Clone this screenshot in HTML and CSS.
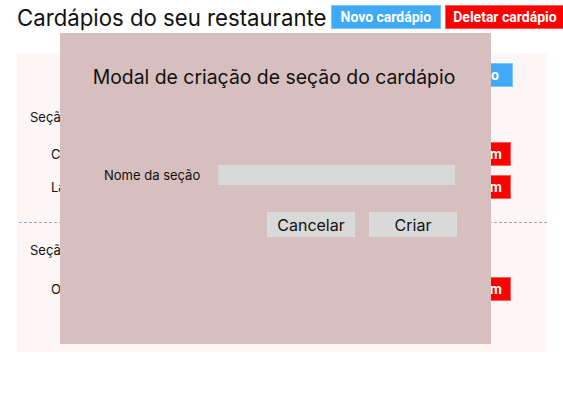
FILE: index.html
```html
<!DOCTYPE html>
<html lang="pt-BR">
<head>
<meta charset="utf-8">
<link rel="stylesheet" href="styles.css">
</head>
<body>
<div class="page">
  <header class="top">
    <h1 class="title">Cardápios do seu restaurante</h1>
    <button class="btn btn-blue">Novo cardápio</button>
    <button class="btn btn-red">Deletar cardápio</button>
  </header>
  <section class="card">
    <div class="card-head">
      <button class="btn btn-blue">Nova seção</button>
    </div>
    <div class="sec">
      <div class="sec-name">Seção 1</div>
      <div class="items">
        <div class="item"><span>Coxinha</span><button class="btn btn-red">Deletar item</button></div>
        <div class="item"><span>Lasanha</span><button class="btn btn-red">Deletar item</button></div>
      </div>
    </div>
    <hr class="div">
    <div class="sec sec2">
      <div class="sec-name">Seção 2</div>
      <div class="items">
        <div class="item"><span>Omelete</span><button class="btn btn-red">Deletar item</button></div>
      </div>
    </div>
  </section>
</div>
<div class="modal">
  <h2 class="modal-title">Modal de criação de seção do cardápio</h2>
  <div class="field">
    <label class="label">Nome da seção</label>
    <div class="input"></div>
  </div>
  <div class="actions">
    <button class="mbtn">Cancelar</button>
    <button class="mbtn">Criar</button>
  </div>
</div>
</body>
</html>
```

FILE: styles.css
```css
* { box-sizing: border-box; }
html, body { margin: 0; padding: 0; background: #fff; }
body { font-family: Inter, "Noto Sans", sans-serif; color: #111; width: 563px; height: 401px; overflow: hidden; position: relative; }
.page { padding: 5px 0 0 17px; }
.top { display: flex; align-items: flex-start; gap: 4px; height: 48px; }
.title { margin: 0; font-weight: 400; font-size: 22.2px; line-height: 26px; color: #111; white-space: nowrap; }
.btn { border: 1px solid transparent; font-family: Roboto, sans-serif; font-weight: 700; font-size: 14px; color: #fff; height: 24px; padding: 0 9px; white-space: nowrap; }
.btn-blue { background: #3eaaf8; border-color: #7cc6f7; }
.btn-red { background: #ff0000; border-color: #ff5a5a; }
.top .btn-red { padding: 0 12px 0 7px; flex-shrink: 0; }
.card { width: 530px; height: 299px; background: #fcf6f6; padding: 10px 34px 0 0; }
.card-head { display: flex; justify-content: flex-end; height: 24px; }
.card-head .btn { padding: 0 13px 0 10px; }
.sec { padding-left: 13px; }
.sec-name { font-size: 13px; margin-top: 22px; line-height: 16px; }
.items { padding: 17px 2px 0 21px; display: flex; flex-direction: column; gap: 9px; }
.item { display: flex; justify-content: space-between; align-items: center; font-size: 13px; }
.item .btn { padding: 0 8px; }
.div { margin: 23px 0 0 2px; width: 528px; border: 0; border-top: 1px dashed #aaa; }
.sec2 .sec-name { margin-top: 19px; }
.sec2 .items { padding-top: 19px; }
.modal { position: absolute; left: 60px; top: 33px; width: 431px; height: 311px; background: #d7bfbf; padding: 32px 34px 0 44px; }
.modal-title { margin: 0 -27px 0 -40px; font-weight: 400; font-size: 19.4px; line-height: 24px; text-align: center; color: #111; white-space: nowrap; }
.field { display: flex; align-items: center; margin-top: 76px; }
.label { font-size: 13px; width: 114px; color: #111; }
.input { width: 237px; height: 20px; background: #d9d9d9; }
.actions { display: flex; justify-content: flex-end; gap: 14px; margin-top: 27px; }
.mbtn { width: 88px; height: 25px; border: 1px solid #dcdcdc; background: #d9d9d9; font-family: Inter, sans-serif; font-size: 16px; color: #111; padding: 0; }
```
